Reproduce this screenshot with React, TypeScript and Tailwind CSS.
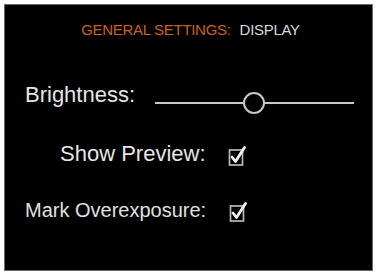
import React from 'react'

function CheckBox() {
  return (
    <svg width="20" height="24" viewBox="0 0 20 24" className="block shrink-0">
      <rect x="1.5" y="8" width="13" height="15" fill="none" stroke="#b8b8b8" strokeWidth="1.7" />
      <path d="M4 15 L7.5 19.5 L16.5 5.5" fill="none" stroke="#f2f2f2" strokeWidth="2.8" strokeLinecap="round" strokeLinejoin="round" />
    </svg>
  )
}

function Slider() {
  return (
    <div className="relative w-[199px] h-[22px] flex items-center">
      <div className="h-[2px] w-full bg-[#c8c8c8]" />
      <div className="absolute left-[88px] top-0 w-[22px] h-[22px] rounded-full border-2 border-[#c8c8c8] bg-black" />
    </div>
  )
}

export default function App() {
  return (
    <div className="w-[376px] h-[273px] bg-white pl-[4px] pt-[4px]" style={{ fontFamily: '"Liberation Sans", Arial, sans-serif' }}>
      <div className="w-[369px] h-[267px] bg-black border border-[#6a6a6a] flex flex-col">
        {/* Header */}
        <div className="flex justify-center items-center gap-[9px] mt-[16px] ml-[4px] text-[15px] leading-[18px] tracking-[-0.3px]">
          <span className="text-[#c9601c]">GENERAL SETTINGS:</span>
          <span className="text-[#d8d8d8]">DISPLAY</span>
        </div>

        {/* Brightness */}
        <div className="flex items-start mt-[43px] pl-[20px]">
          <span className="text-[22px] leading-[26px] text-[#e6e6e6]">Brightness:</span>
          <div className="ml-[20px] mt-[10px]">
            <Slider />
          </div>
        </div>

        {/* Show Preview */}
        <div className="flex items-center mt-[27px] pl-[55px]">
          <span className="text-[22px] leading-[26px] text-[#e6e6e6] w-[168px]">Show Preview:</span>
          <CheckBox />
        </div>

        {/* Mark Overexposure */}
        <div className="flex items-center mt-[31px] pl-[20px]">
          <span className="text-[20px] leading-[24px] text-[#e0e0e0] w-[204px]">Mark Overexposure:</span>
          <CheckBox />
        </div>
      </div>
    </div>
  )
}
